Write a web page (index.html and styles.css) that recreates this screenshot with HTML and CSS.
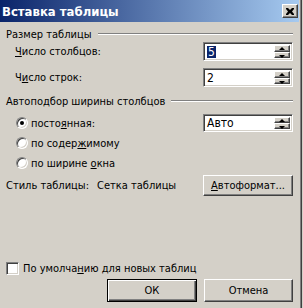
FILE: index.html
```html
<!DOCTYPE html>
<html lang="ru">
<head>
    <meta charset="UTF-8">
    <title>Вставка таблицы</title>
    <link rel="stylesheet" href="styles.css">
</head>
<body>
    <div class="window">
        <div class="titlebar">
            <span class="title">Вставка таблицы</span>
            <span class="close">
                <svg width="8" height="7" viewBox="0 0 8 7">
                    <path d="M0 0h2l2 2 2-2h2v1l-2 2.5 2 2.5v1h-2l-2-2-2 2h-2v-1l2-2.5-2-2.5z" fill="#000"/>
                </svg>
            </span>
        </div>

        <div class="content">
            <div class="group-head"><span>Размер таблицы</span><i class="rule"></i></div>
            <div class="field first">
                <span class="label"><u>Ч</u>исло столбцов:</span>
                <div class="spin">
                    <span class="val"><span class="sel">5</span></span>
                    <span class="arrows"><b class="up"></b><b class="down"></b></span>
                </div>
            </div>
            <div class="field">
                <span class="label">Ч<u>и</u>сло строк:</span>
                <div class="spin">
                    <span class="val">2</span>
                    <span class="arrows"><b class="up"></b><b class="down"></b></span>
                </div>
            </div>

            <div class="group-head second"><span>Автоподбор ширины столбцов</span><i class="rule"></i></div>
            <div class="radios">
                <div class="radio-row">
                    <span class="radio checked"></span>
                    <span class="label">посто<u>я</u>нная:</span>
                    <div class="spin small">
                        <span class="val">Авто</span>
                        <span class="arrows"><b class="up"></b><b class="down"></b></span>
                    </div>
                </div>
                <div class="radio-row">
                    <span class="radio"></span>
                    <span class="label">по содер<u>ж</u>имому</span>
                </div>
                <div class="radio-row">
                    <span class="radio"></span>
                    <span class="label">по ширине <u>о</u>кна</span>
                </div>
            </div>

            <div class="style-row">
                <span class="style-label">Стиль таблицы:</span>
                <span class="style-name">Сетка таблицы</span>
                <button class="btn format"><u>А</u>втоформат...</button>
            </div>

            <div class="check-row">
                <span class="checkbox"></span>
                <span class="label">По умолча<u>н</u>ию для новых таблиц</span>
            </div>

            <div class="buttons">
                <button class="btn default">ОК</button>
                <button class="btn cancel">Отмена</button>
            </div>
        </div>
    </div>
</body>
</html>
```

FILE: styles.css
```css
body{
    margin: 0;
    background-color: #D4D0C8;
    font-family: "DejaVu Sans Condensed", "DejaVu Sans", sans-serif;
    font-size: 11px;
    color: black;
}

.window{
    width: 299px;
    height: 308px;
    padding-right: 1px;
    background-color: #D4D0C8;
    border-right: 1px solid #808080;
    box-shadow: 1px 0 0 #404040;
}

.titlebar{
    height: 22px;
    display: flex;
    align-items: center;
    justify-content: space-between;
    background: linear-gradient(90deg, #0A246A, #A6CAF0);
}
.title{
    color: white;
    font-weight: bold;
    font-size: 13px;
    padding-left: 2px;
}
.close{
    width: 16px;
    height: 14px;
    margin-right: 1px;
    box-sizing: border-box;
    display: flex;
    align-items: center;
    justify-content: center;
    background-color: #D4D0C8;
    border: 1px solid;
    border-color: #fff #404040 #404040 #fff;
    box-shadow: inset -1px -1px #808080;
}

.content{
    padding: 6px 6px 0 6px;
}

.group-head{
    display: flex;
    align-items: center;
    height: 13px;
}
.group-head.second{
    margin-top: 8px;
}
.rule{
    flex: 1;
    height: 0;
    margin-left: 6px;
    margin-top: -1px;
    border-top: 1px solid #808080;
    border-bottom: 1px solid #fff;
}

.field{
    display: flex;
    align-items: center;
    justify-content: space-between;
    padding-left: 9px;
    margin-top: 7px;
}
.field.first{
    margin-top: 1px;
}

.spin{
    width: 90px;
    height: 19px;
    box-sizing: border-box;
    display: flex;
    background-color: white;
    border: 1px solid;
    border-color: #808080 #fff #fff #808080;
    box-shadow: inset 1px 1px #404040, inset -1px -1px #D4D0C8;
    padding: 2px 2px 2px 2px;
}
.spin.small{
    height: 18px;
    margin-left: auto;
}
.val{
    flex: 1;
    display: flex;
    align-items: center;
    padding-left: 1px;
    font-size: 12px;
}
.sel{
    background-color: #0A246A;
    color: white;
    padding: 0 1px;
    line-height: 12px;
}
.arrows{
    width: 16px;
    display: flex;
    flex-direction: column;
}
.arrows b{
    flex: 1;
    box-sizing: border-box;
    position: relative;
    background-color: #D4D0C8;
    border: 1px solid;
    border-color: #fff #404040 #404040 #fff;
    box-shadow: inset -1px -1px #808080;
}
.arrows b::after{
    content: "";
    position: absolute;
    left: 4px;
    width: 0;
    height: 0;
    border-left: 3px solid transparent;
    border-right: 3px solid transparent;
}
.arrows .up::after{
    top: 1px;
    border-bottom: 3px solid black;
}
.arrows .down::after{
    top: 2px;
    border-top: 3px solid black;
}

.radios{
    margin-top: 5px;
    padding-left: 10px;
}
.radio-row{
    display: flex;
    align-items: center;
    height: 20px;
}
.radio{
    width: 12px;
    height: 12px;
    box-sizing: border-box;
    border-radius: 50%;
    background-color: white;
    border: 1px solid;
    border-color: #808080 #fff #fff #808080;
    box-shadow: inset 1px 1px #404040, inset -1px -1px #D4D0C8;
    margin-right: 3px;
    display: flex;
    align-items: center;
    justify-content: center;
}
.radio.checked::after{
    content: "";
    width: 4px;
    height: 4px;
    border-radius: 50%;
    background-color: black;
}

.style-row{
    display: flex;
    align-items: center;
    margin-top: 2px;
}
.style-label{
    width: 91px;
}
.style-name{
    flex: 1;
}

.btn{
    font-family: inherit;
    font-size: 11px;
    color: black;
    background-color: #D4D0C8;
    border: 1px solid;
    border-color: #fff #404040 #404040 #fff;
    box-shadow: inset -1px -1px #808080;
    padding: 0;
}
.btn.format{
    width: 90px;
    height: 21px;
}

.check-row{
    display: flex;
    align-items: center;
    margin-top: 66px;
    height: 13px;
}
.checkbox{
    width: 13px;
    height: 13px;
    box-sizing: border-box;
    background-color: white;
    border: 1px solid;
    border-color: #808080 #fff #fff #808080;
    box-shadow: inset 1px 1px #404040, inset -1px -1px #D4D0C8;
    margin-right: 4px;
}

.buttons{
    display: flex;
    justify-content: flex-end;
    gap: 7px;
    margin-top: 4px;
}
.buttons .btn{
    height: 23px;
}
.btn.default{
    width: 90px;
    border-color: black;
    box-shadow: inset 1px 1px #fff, inset -1px -1px #404040, inset -2px -2px #808080;
}
.btn.cancel{
    width: 89px;
}
```
